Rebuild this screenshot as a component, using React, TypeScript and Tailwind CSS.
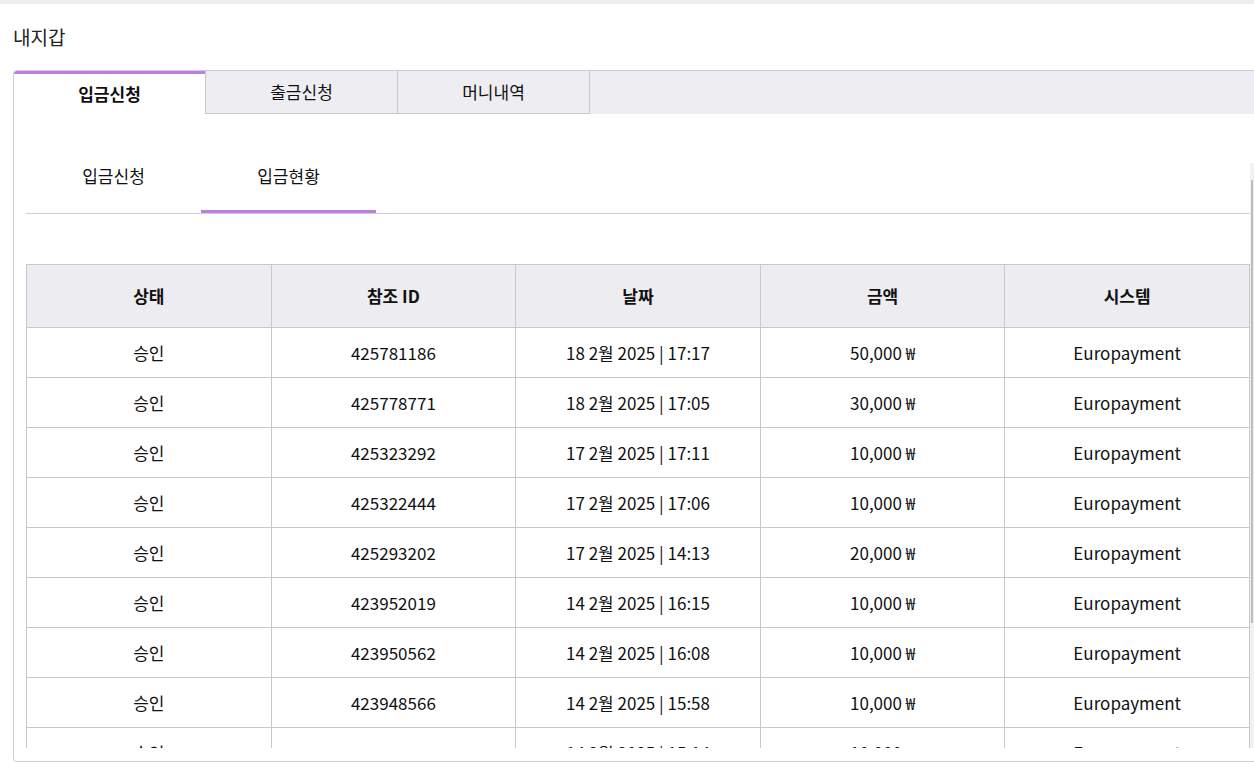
const rows = [
  ["425781186", "18 2월 2025 | 17:17", "50,000 ₩"],
  ["425778771", "18 2월 2025 | 17:05", "30,000 ₩"],
  ["425323292", "17 2월 2025 | 17:11", "10,000 ₩"],
  ["425322444", "17 2월 2025 | 17:06", "10,000 ₩"],
  ["425293202", "17 2월 2025 | 14:13", "20,000 ₩"],
  ["423952019", "14 2월 2025 | 16:15", "10,000 ₩"],
  ["423950562", "14 2월 2025 | 16:08", "10,000 ₩"],
  ["423948566", "14 2월 2025 | 15:58", "10,000 ₩"],
  ["423938987", "14 2월 2025 | 15:14", "10,000 ₩"],
];

const headers = ["상태", "참조 ID", "날짜", "금액", "시스템"];

export default function App() {
  return (
    <div
      className="w-full h-[771px] overflow-hidden bg-white text-[#111]"
      style={{ fontFamily: '"Noto Sans CJK KR", "Noto Sans", sans-serif' }}
    >
      <div className="h-[4px] bg-[#eeeef2]" />
      <div className="pl-[13px]">
        <h1 className="h-[66px] flex items-center text-[19px] font-normal text-[#222]">내지갑</h1>

        {/* 카드 */}
        <div className="relative w-[1260px] h-[692px] border border-[#cdcdd2] rounded-[4px] overflow-hidden">
          {/* 상단 탭 */}
          <div className="flex h-[43px] bg-[#eeeef2]">
            <div className="w-[191px] flex items-center justify-center bg-white border-t-[3px] border-[#bf7be8] font-bold text-[17px] pb-[1px]">
              입금신청
            </div>
            <div className="w-[193px] flex items-center justify-center border border-t-0 border-[#c8c8cc] text-[17px]">
              출금신청
            </div>
            <div className="w-[192px] flex items-center justify-center border border-t-0 border-l-0 border-[#c8c8cc] text-[17px]">
              머니내역
            </div>
          </div>

          <div className="px-[12px]">
            {/* 서브 탭 */}
            <div className="mt-[27px] flex w-[1224px] border-b border-[#cfcfd4]">
              <div className="w-[175px] h-[72px] flex items-center justify-center text-[17px] pb-[3px]">입금신청</div>
              <div className="w-[175px] h-[72px] flex items-center justify-center text-[17px] border-b-[3px] border-[#bf7be8]">
                입금현황
              </div>
            </div>

            {/* 테이블 */}
            <div className="h-[534px] overflow-hidden">
              <div className="mt-[50px] w-[1224px] border-l border-t border-[#c8c8cc]">
                <div className="grid grid-cols-5 h-[63px] bg-[#ededf1]">
                  {headers.map((h) => (
                    <div key={h} className="flex items-center justify-center border-r border-b border-[#c8c8cc] font-bold text-[17px]">
                      {h}
                    </div>
                  ))}
                </div>
                {rows.map((r) => (
                  <div key={r[0]} className="grid grid-cols-5 h-[50px] text-[17px]">
                    <div className="flex items-center justify-center border-r border-b border-[#c8c8cc]">승인</div>
                    <div className="flex items-center justify-center border-r border-b border-[#c8c8cc]">{r[0]}</div>
                    <div className="flex items-center justify-center border-r border-b border-[#c8c8cc]">{r[1]}</div>
                    <div className="flex items-center justify-center border-r border-b border-[#c8c8cc]">{r[2]}</div>
                    <div className="flex items-center justify-center border-r border-b border-[#c8c8cc]">Europayment</div>
                  </div>
                ))}
              </div>
            </div>
          </div>

          {/* 스크롤바 */}
          <div className="absolute left-[1236px] top-[92px] w-[4px] h-[585px] bg-[#f1f1f1]">
            <div className="ml-[1px] mt-[17px] w-[2px] h-[443px] bg-[#bdbdbd]" />
          </div>
        </div>
      </div>
    </div>
  );
}
